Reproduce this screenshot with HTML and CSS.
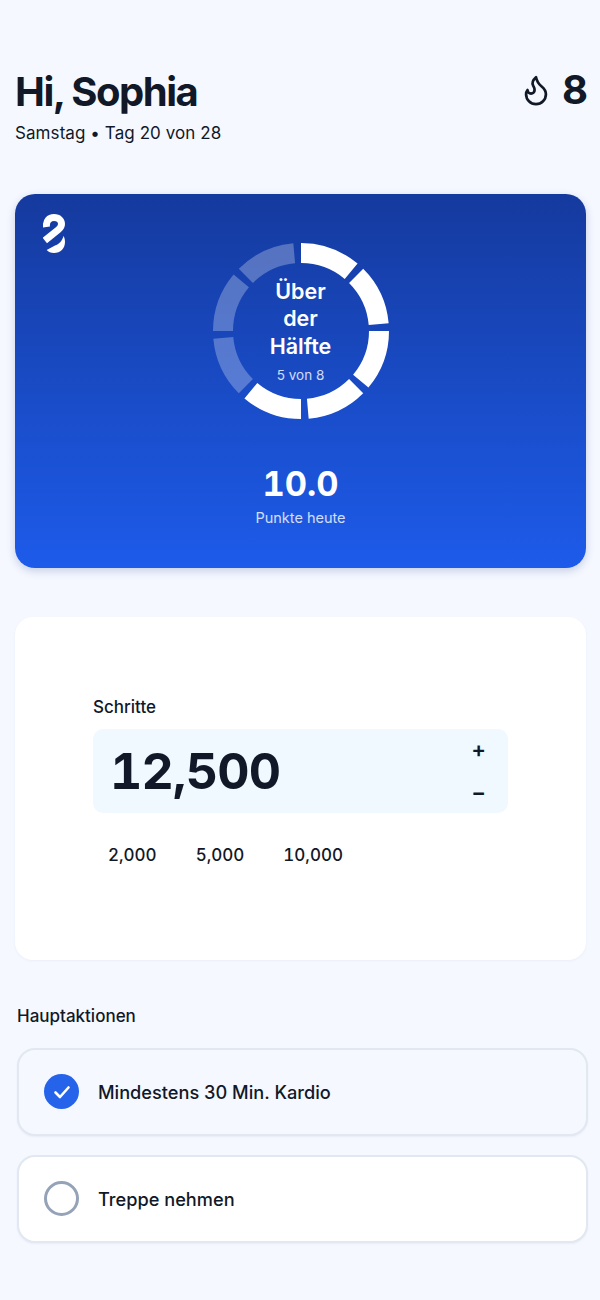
FILE: index.html
```html
<!DOCTYPE html>
<html lang="de">
<head>
  <meta charset="UTF-8" />
  <meta name="viewport" content="width=device-width, initial-scale=1.0" />
  <title>Heute</title>
  <link rel="stylesheet" href="styles.css">
</head>
<body>
  <header class="top">
    <div>
      <h1>Hi, Sophia</h1>
      <p class="day">Samstag • Tag 20 von 28</p>
    </div>
    <div class="streak">
      <svg class="flame" viewBox="0 0 24 24" fill="none" stroke="currentColor" stroke-width="1.9" stroke-linecap="round" stroke-linejoin="round">
        <path d="M8.5 14.5A2.5 2.5 0 0 0 11 12c0-1.38-.5-2-1-3-1.072-2.143-.224-4.054 2-6 .5 2.5 2 4.9 4 6.5 2 1.6 3 3.5 3 5.5a7 7 0 1 1-14 0c0-1.153.433-2.294 1-3a2.5 2.5 0 0 0 2.5 2.5z"/>
      </svg>
      <span>8</span>
    </div>
  </header>

  <section class="hero">
    <svg class="logo" viewBox="0 0 22 39">
      <path fill="none" stroke="#fff" stroke-width="7" d="M3.500 13C2.800 7 6.200 3.500 11 3.500c4.800 0 7.500 3 7.500 6.500 0 2.500-1 3.900-3.100 5.600L1.800 26.500"/>
      <path fill="#fff" d="M20.600 22C21.600 24 22 26 22 28 22 34.500 17.500 39 11 39 7.800 39 5.300 37.700 3.700 36L12 31.500C16 30.500 19 27 20.600 22z"/>
    </svg>
    <div class="ring">
      <svg viewBox="0 0 176 176">
        <g fill="none" stroke="#fff" stroke-width="20">
          <path d="M88 10A78 78 0 0 1 138.140 28.250"/>
          <path d="M143.150 32.850A78 78 0 0 1 165.700 81.200"/>
          <path d="M166 88A78 78 0 0 1 147.750 138.140"/>
          <path d="M143.150 143.150A78 78 0 0 1 94.800 165.700"/>
          <path d="M88 166A78 78 0 0 1 37.860 147.750"/>
          <path class="seg-off" d="M32.850 143.150A78 78 0 0 1 10.300 94.800"/>
          <path class="seg-off" d="M10 88A78 78 0 0 1 28.250 37.860"/>
          <path class="seg-off" d="M32.850 32.850A78 78 0 0 1 81.200 10.300"/>
        </g>
      </svg>
      <div class="ring-text">
        <strong>Über der Hälfte</strong>
        <span>5 von 8</span>
      </div>
    </div>
    <div class="points">10.0</div>
    <div class="points-label">Punkte heute</div>
  </section>

  <section class="steps">
    <label class="steps-label">Schritte</label>
    <div class="steps-box">
      <span class="steps-value">12,500</span>
      <div class="stepper">
        <span>+</span>
        <span>−</span>
      </div>
    </div>
    <div class="presets">
      <span>2,000</span>
      <span>5,000</span>
      <span>10,000</span>
    </div>
  </section>

  <h2>Hauptaktionen</h2>
  <div class="actions">
    <div class="action done">
      <span class="check">
        <svg viewBox="0 0 24 24" fill="none" stroke="#fff" stroke-width="2.6" stroke-linecap="round" stroke-linejoin="round">
          <path d="M5.500 12.500l4.500 4.500 8.500-9.500"/>
        </svg>
      </span>
      <span>Mindestens 30 Min. Kardio</span>
    </div>
    <div class="action">
      <span class="check"></span>
      <span>Treppe nehmen</span>
    </div>
  </div>
</body>
</html>
```

FILE: styles.css
```css
* {
  box-sizing: border-box;
}
body {
  margin: 0;
  height: 1300px;
  padding: 68px 14px 0 15px;
  background: #f5f8ff;
  color: #111827;
  font-family: Inter, sans-serif;
}
.top {
  display: flex;
  justify-content: space-between;
  align-items: flex-start;
  height: 126px;
}
h1 {
  margin: 0;
  font-size: 40px;
  line-height: 48px;
  font-weight: 700;
  letter-spacing: -1.5px;
}
.day {
  margin: 5px 0 0;
  font-size: 17px;
  line-height: 24px;
  letter-spacing: 0.08px;
}
.streak {
  display: flex;
  align-items: center;
  gap: 9px;
  margin-right: -2px;
  font-size: 40px;
  line-height: 44px;
  font-weight: 700;
}
.flame {
  width: 34px;
  height: 34px;
}
.hero {
  position: relative;
  height: 374px;
  padding-top: 49px;
  display: flex;
  flex-direction: column;
  align-items: center;
  color: #fff;
  border-radius: 20px;
  background: linear-gradient(180deg, #153a9e 0%, #1d5bea 100%);
  box-shadow: 0 3px 8px rgba(30, 58, 138, 0.22);
}
.logo {
  position: absolute;
  left: 28px;
  top: 20px;
  width: 22px;
  height: 39px;
}
.ring {
  position: relative;
  width: 176px;
  height: 176px;
}
.ring svg {
  display: block;
  width: 176px;
  height: 176px;
}
.seg-off {
  stroke-opacity: 0.27;
}
.ring-text {
  position: absolute;
  inset: 0;
  display: flex;
  flex-direction: column;
  align-items: center;
  justify-content: center;
  text-align: center;
}
.ring-text strong {
  width: 76px;
  font-size: 21.500px;
  line-height: 27.500px;
  font-weight: 600;
}
.ring-text span {
  margin-top: 6px;
  font-size: 13.500px;
  line-height: 18px;
  opacity: 0.8;
}
.points {
  margin-top: 44px;
  font-size: 34.500px;
  line-height: 42px;
  font-weight: 700;
  font-variant-numeric: tabular-nums;
}
.points-label {
  margin-top: 3px;
  font-size: 14.500px;
  line-height: 20px;
  opacity: 0.8;
}
.steps {
  height: 343px;
  margin-top: 49px;
  padding: 79px 78px 0;
  background: #fff;
  border-radius: 18px;
  box-shadow: 0 1px 3px rgba(30, 58, 138, 0.05);
}
.steps-label {
  display: block;
  font-size: 17px;
  line-height: 22px;
  font-weight: 500;
}
.steps-box {
  display: flex;
  justify-content: space-between;
  align-items: center;
  height: 84px;
  margin-top: 11px;
  padding: 0 22px 0 17px;
  background: #f0f9ff;
  border-radius: 10px;
}
.steps-value {
  font-size: 50px;
  line-height: 60px;
  font-weight: 700;
  letter-spacing: -0.8px;
  font-variant-numeric: tabular-nums;
}
.stepper {
  display: flex;
  flex-direction: column;
  gap: 18px;
  font-size: 22px;
  line-height: 25px;
  font-weight: 600;
}
.presets {
  display: flex;
  gap: 39px;
  margin-top: 30px;
  padding-left: 15px;
  font-size: 17px;
  line-height: 24px;
  font-weight: 500;
  font-variant-numeric: tabular-nums;
}
h2 {
  margin: 45px 0 0 2px;
  font-size: 17px;
  line-height: 22px;
  font-weight: 500;
}
.actions {
  display: flex;
  flex-direction: column;
  gap: 19px;
  margin: 21px -2px 0 2px;
}
.action {
  display: flex;
  align-items: center;
  gap: 19px;
  height: 88px;
  padding-left: 25px;
  padding-bottom: 1px;
  background: #fff;
  border: 2.500px solid #e2e8f0;
  border-radius: 18px;
  font-size: 18.200px;
  font-weight: 500;
  box-shadow: 0 1px 2px rgba(30, 58, 138, 0.06);
}
.action.done {
  background: #f5f8ff;
}
.check {
  flex: none;
  width: 35px;
  height: 35px;
  border: 3px solid #94a3b8;
  border-radius: 50%;
}
.done .check {
  display: flex;
  align-items: center;
  justify-content: center;
  background: #2563eb;
  border: none;
}
.check svg {
  width: 24px;
  height: 24px;
}
```
